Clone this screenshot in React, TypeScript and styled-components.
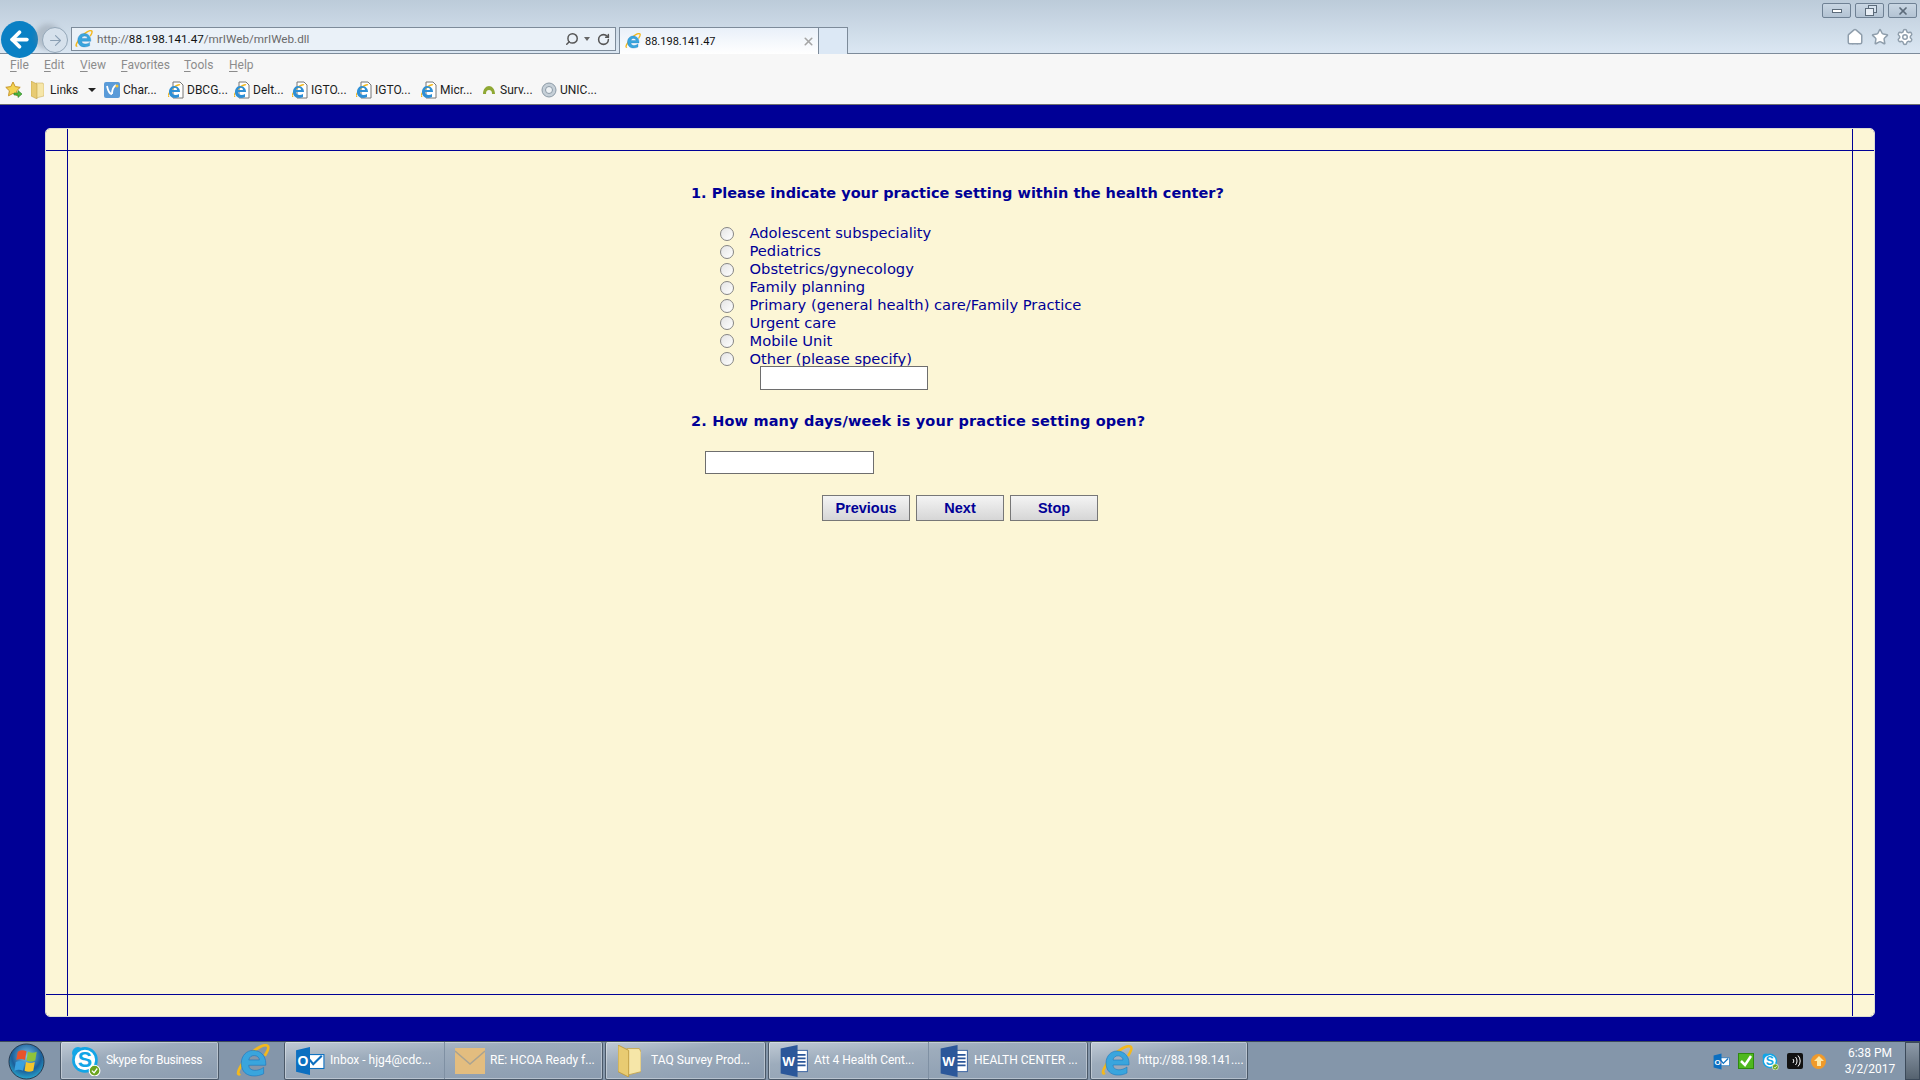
import React from 'react'
import styled, { createGlobalStyle } from 'styled-components'
import { ArrowLeft, ArrowRight, Home, RotateCw, Search, Settings, Star, X } from 'lucide-react'

const UI_FONT = `Roboto, "Noto Sans", sans-serif`
const FORM_FONT = `"DejaVu Sans", Verdana, sans-serif`
const NAVY = '#000096'

const GlobalStyle = createGlobalStyle`
  html, body, #root {
    margin: 0;
    height: 100%;
  }
  body {
    overflow: hidden;
    font-family: ${UI_FONT};
  }
  * {
    box-sizing: border-box;
  }
`

const IeIcon = ({ size = 16 }: { size?: number }) => (
  <svg width={size} height={size} viewBox="0 0 32 32">
    <path d="M4 28c-5 3 0-9 7-16C17 5 27-1 30 2c1.500 2-1 6-3 9" fill="none" stroke="#f3b81d" strokeWidth="2.600" />
    <path
      d="M16 6c7 0 12 5 12 12v2H12c0 6 9 6 14 2v6c-8 4-21 3-21-10C5 11 10 6 16 6zm-4 9h10c0-5-9-6-10 0z"
      fill="#39a5dd"
      stroke="#1c78c0"
      strokeWidth="0.600"
    />
  </svg>
)

const IeGlyph = () => (
  <g>
    <path d="M2 13C0 15 2 9 5 6 8 3 12 1 13 2" fill="none" stroke="#f3b81d" strokeWidth="1.400" />
    <path d="M7 3c4 0 6 3 6 6H5c0 3 4 4 7 2v3c-4 2-10 1-10-5 0-3 2-6 5-6zM5 7h5c0-3-4-3-5 0z" fill="#2d8fd6" />
  </g>
)

const PageIcon = () => (
  <svg width="16" height="18" viewBox="0 0 16 18">
    <path d="M5 1h7l3 3v13H5z" fill="#fff" stroke="#777" />
    <g transform="translate(-1 2)">
      <IeGlyph />
    </g>
  </svg>
)

const StarIcon = () => (
  <svg width="18" height="18" viewBox="0 0 18 18">
    <path d="M8 1l2.200 4.600 5 .7-3.600 3.500.9 5L8 12.400 3.500 14.800l.9-5L.8 6.300l5-.7z" fill="#f4d453" stroke="#c7962a" />
    <path d="M9 12h4V9.500l4 3.500-4 3.500V14H9z" fill="#4fb83f" stroke="#2c7f25" strokeWidth="0.600" />
  </svg>
)

const FolderIcon = ({ height = 18 }: { height?: number }) => (
  <svg width={(height * 13) / 18} height={height} viewBox="0 0 13 18">
    <path d="M5 2h7l1 2v11l-8 2z" fill="#f6e6a8" stroke="#c5a650" strokeWidth="0.500" />
    <path d="M0 0l6 3v15l-6-3z" fill="#e8cb72" stroke="#bb9a3e" strokeWidth="0.500" />
  </svg>
)

const ChartIcon = () => (
  <svg width="16" height="16" viewBox="0 0 16 16">
    <rect width="16" height="16" rx="2" fill="#5a9bd8" />
    <path d="M3 4c1 5 3 8 5 8M12 3C9 5 8 8 8 12" fill="none" stroke="#fff" strokeWidth="1.800" />
    <circle cx="13" cy="4" r="1.500" fill="#f2c230" />
  </svg>
)

const SurveyIcon = () => (
  <svg width="16" height="16" viewBox="0 0 16 16">
    <path d="M2 12c0-5 3-8 6-8s6 3 6 8h-3c0-3-1-4-3-4s-3 1-3 4z" fill="#8fa834" />
  </svg>
)

const GlobeIcon = () => (
  <svg width="16" height="16" viewBox="0 0 16 16">
    <circle cx="8" cy="8" r="7" fill="#c6d0d8" stroke="#8c9aa6" />
    <circle cx="8" cy="8" r="3.500" fill="#eef2f5" stroke="#8c9aa6" />
  </svg>
)

const OrbIcon = () => (
  <svg width="37" height="37" viewBox="0 0 38 38">
    <defs>
      <radialGradient id="orbFill" cx="50%" cy="35%" r="70%">
        <stop offset="0" stopColor="#7cc4ea" />
        <stop offset="0.600" stopColor="#1b5f9a" />
        <stop offset="1" stopColor="#2bb6d8" />
      </radialGradient>
    </defs>
    <circle cx="19" cy="19" r="18" fill="url(#orbFill)" stroke="#26394f" />
    <path d="M10 9c3-2 6-2 9-.500l-1.500 9c-3-1.500-6-1.500-9 0z" fill="#e8532b" />
    <path d="M20.500 9c3 1.500 6 1.500 9 0l-1.500 9c-3 1.500-6 1.500-9 0z" fill="#8fc33a" />
    <path d="M8 19.500c3-1.500 6-1.500 9 0l-1.500 9c-3-1.500-6-1.500-9 0z" fill="#3aa1e0" />
    <path d="M18.500 19.500c3 1.500 6 1.500 9 0l-1.500 9c-3 1.500-6 1.500-9 0z" fill="#f5c52c" />
  </svg>
)

const SkypeIcon = ({ size = 30 }: { size?: number }) => (
  <svg width={size} height={size} viewBox="0 0 28 28">
    <circle cx="13" cy="13" r="10.500" fill="#fff" stroke="#12a5e6" strokeWidth="3" />
    <circle cx="6.500" cy="6.500" r="5.500" fill="#12a5e6" />
    <circle cx="19.500" cy="19.500" r="5.500" fill="#12a5e6" />
    <circle cx="13" cy="13" r="9.500" fill="#fff" />
    <text x="13" y="20" textAnchor="middle" fontFamily="Liberation Sans" fontWeight="700" fontSize="20" fill="#12a5e6">
      S
    </text>
    <circle cx="22" cy="23" r="5" fill="#6ba41f" stroke="#fff" />
    <path d="M19.500 23l2 2 3-4" fill="none" stroke="#fff" strokeWidth="1.200" />
  </svg>
)

const OutlookIcon = ({ size = 30 }: { size?: number }) => (
  <svg width={size} height={size} viewBox="0 0 28 28">
    <rect x="11" y="8" width="16" height="13" fill="#fff" stroke="#0c6fc0" />
    <path d="M13 12l4 5 8-8" fill="none" stroke="#0c6fc0" strokeWidth="2" />
    <path d="M1 4l13-3v26L1 24z" fill="#0c6fc0" />
    <text x="7.500" y="19" textAnchor="middle" fontFamily="Liberation Sans" fontWeight="700" fontSize="13" fill="#fff">
      O
    </text>
  </svg>
)

const MailIcon = () => (
  <svg width="30" height="26" viewBox="0 0 30 26">
    <rect width="30" height="26" fill="#e3bd7f" />
    <path d="M0 3l15 13L30 3" fill="none" stroke="#a9a392" strokeWidth="1.500" />
  </svg>
)

const WordIcon = () => (
  <svg width="30" height="32" viewBox="0 0 30 36">
    <rect x="14" y="6" width="16" height="24" fill="#fff" stroke="#2b579a" />
    <path d="M18 11h10M18 15h10M18 19h10M18 23h10" stroke="#2b579a" strokeWidth="2" />
    <path d="M0 4l19-4v36L0 32z" fill="#2b579a" />
    <text x="9" y="24" textAnchor="middle" fontFamily="Liberation Sans" fontWeight="700" fontSize="15" fill="#fff">
      W
    </text>
  </svg>
)

const menuItems = [
  { key: 'F', rest: 'ile', w: 34 },
  { key: 'E', rest: 'dit', w: 36 },
  { key: 'V', rest: 'iew', w: 41 },
  { key: 'F', rest: 'avorites', w: 63 },
  { key: 'T', rest: 'ools', w: 45 },
  { key: 'H', rest: 'elp', w: 30 },
]

const favorites = [
  { label: 'Char...', icon: <ChartIcon />, w: 64 },
  { label: 'DBCG...', icon: <PageIcon />, w: 66 },
  { label: 'Delt...', icon: <PageIcon />, w: 58 },
  { label: 'IGTO...', icon: <PageIcon />, w: 64 },
  { label: 'IGTO...', icon: <PageIcon />, w: 65 },
  { label: 'Micr...', icon: <PageIcon />, w: 60 },
  { label: 'Surv...', icon: <SurveyIcon />, w: 60 },
  { label: 'UNIC...', icon: <GlobeIcon />, w: 60 },
]

const options = [
  'Adolescent subspeciality',
  'Pediatrics',
  'Obstetrics/gynecology',
  'Family planning',
  'Primary (general health) care/Family Practice',
  'Urgent care',
  'Mobile Unit',
  'Other (please specify)',
]

const Browser = () => (
  <Div_Chrome>
    <Div_TitleBar>
      <Div_NavButtons>
        <Btn_Back>
          <ArrowLeft size={25} strokeWidth={3.600} color="#fff" />
        </Btn_Back>
        <Btn_Forward>
          <ArrowRight size={17} strokeWidth={1.500} color="#8a9fb3" />
        </Btn_Forward>
      </Div_NavButtons>
      <Div_AddressBar>
        <IeIcon size={18} />
        <Span_Url>
          http://<B_Host>88.198.141.47</B_Host>/mrIWeb/mrIWeb.dll
        </Span_Url>
        <Search size={14} strokeWidth={2.500} color="#555" style={{ transform: 'scaleX(-1)' }} />
        <I_Caret />
        <RotateCw size={13} strokeWidth={2.800} color="#555" />
      </Div_AddressBar>
      <Div_Tab>
        <IeIcon size={16} />
        <Span_TabTitle>88.198.141.47</Span_TabTitle>
        <X size={13} strokeWidth={3} color="#a5a5a5" />
      </Div_Tab>
      <Div_NewTab />
      <Div_WindowSide>
        <Div_WindowButtons>
          <Btn_Window>
            <I_Minimize />
          </Btn_Window>
          <Btn_Window>
            <I_Restore />
          </Btn_Window>
          <Btn_Window>
            <X size={12} strokeWidth={3.500} color="#5c6b7a" />
          </Btn_Window>
        </Div_WindowButtons>
        <Div_ToolIcons>
          <Home size={18} fill="#fff" color="#8f9eac" />
          <Star size={18} fill="#fff" color="#8f9eac" />
          <Settings size={18} fill="#fff" color="#8f9eac" />
        </Div_ToolIcons>
      </Div_WindowSide>
    </Div_TitleBar>
    <Div_MenuBar>
      {menuItems.map((item) => (
        <Span_Menu key={item.rest} $width={item.w}>
          <U_Key>{item.key}</U_Key>
          {item.rest}
        </Span_Menu>
      ))}
    </Div_MenuBar>
    <Div_LinksBar>
      <StarIcon />
      <Div_LinksFolder>
        <FolderIcon />
        <span>Links</span>
        <I_LinksCaret />
      </Div_LinksFolder>
      {favorites.map((fav, i) => (
        <Div_Favorite key={i} $width={fav.w}>
          {fav.icon}
          <span>{fav.label}</span>
        </Div_Favorite>
      ))}
    </Div_LinksBar>
  </Div_Chrome>
)

const Survey = () => (
  <Form_Survey>
    <H_Question>1. Please indicate your practice setting within the health center?</H_Question>
    <Div_Options>
      {options.map((option) => (
        <Label_Option key={option}>
          <Input_Radio type="radio" name="setting" />
          <Span_OptionText>{option}</Span_OptionText>
        </Label_Option>
      ))}
      <Input_Other type="text" />
    </Div_Options>
    <H_Question $tracking={0.17}>2. How many days/week is your practice setting open?</H_Question>
    <Input_Days type="text" />
    <Div_Buttons>
      <Btn_Survey type="button">Previous</Btn_Survey>
      <Btn_Survey type="button">Next</Btn_Survey>
      <Btn_Survey type="button">Stop</Btn_Survey>
    </Div_Buttons>
  </Form_Survey>
)

const Taskbar = () => (
  <Div_Taskbar>
    <Div_Orb>
      <OrbIcon />
    </Div_Orb>
    <Div_TaskButton $width={159}>
      <SkypeIcon />
      <Span_TaskLabel $tracking={-0.3}>Skype for Business</Span_TaskLabel>
    </Div_TaskButton>
    <Div_PinnedIcon>
      <IeIcon size={34} />
    </Div_PinnedIcon>
    <Div_TaskGroup>
      <Div_TaskSlice $width={160}>
        <OutlookIcon />
        <Span_TaskLabel>Inbox - hjg4@cdc...</Span_TaskLabel>
      </Div_TaskSlice>
      <Div_TaskSlice $width={157}>
        <MailIcon />
        <Span_TaskLabel>RE: HCOA Ready f...</Span_TaskLabel>
      </Div_TaskSlice>
    </Div_TaskGroup>
    <Div_TaskButton $width={161} $pad={12} $gap={10}>
      <FolderIcon height={32} />
      <Span_TaskLabel>TAQ Survey Prod...</Span_TaskLabel>
    </Div_TaskButton>
    <Div_TaskGroup>
      <Div_TaskSlice $width={160}>
        <WordIcon />
        <Span_TaskLabel>Att 4 Health Cent...</Span_TaskLabel>
      </Div_TaskSlice>
      <Div_TaskSlice $width={158}>
        <WordIcon />
        <Span_TaskLabel>HEALTH CENTER ...</Span_TaskLabel>
      </Div_TaskSlice>
    </Div_TaskGroup>
    <Div_TaskButton $width={158}>
      <IeIcon size={32} />
      <Span_TaskLabel>http://88.198.141....</Span_TaskLabel>
    </Div_TaskButton>
    <Div_Tray>
      <OutlookIcon size={17} />
      <I_GreenCheck>
        <svg width="14" height="14" viewBox="0 0 14 14">
          <path d="M2 7l4 4 6-9" fill="none" stroke="#fff" strokeWidth="2.500" />
        </svg>
      </I_GreenCheck>
      <SkypeIcon size={17} />
      <I_BlackSignal>
        <svg width="14" height="14" viewBox="0 0 14 14">
          <path d="M5 5a3 3 0 0 1 0 4M7.500 3a6 6 0 0 1 0 8M10 1.500a8 8 0 0 1 0 11" fill="none" stroke="#fff" />
        </svg>
      </I_BlackSignal>
      <I_Update>
        <svg width="10" height="10" viewBox="0 0 10 10">
          <path d="M5 0l5 5H7v5H3V5H0z" fill="#ffe9a6" />
        </svg>
      </I_Update>
      <Div_Clock>
        <span>6:38 PM</span>
        <span>3/2/2017</span>
      </Div_Clock>
    </Div_Tray>
    <Div_ShowDesktop />
  </Div_Taskbar>
)

const App = () => (
  <>
    <GlobalStyle />
    <Div_Page>
      <Browser />
      <Main_Content>
        <Div_Panel>
          <Div_Cell />
          <Div_Cell />
          <Div_Cell />
          <Div_Cell />
          <Div_Cell>
            <Survey />
          </Div_Cell>
          <Div_Cell />
          <Div_Cell />
          <Div_Cell />
          <Div_Cell />
        </Div_Panel>
      </Main_Content>
      <Taskbar />
    </Div_Page>
  </>
)

export default App

const Div_Page = styled.div`
  width: 1920px;
  height: 1080px;
  display: flex;
  flex-direction: column;
  overflow: hidden;
`

const Div_Chrome = styled.header`
  flex: none;
  height: 105px;
  background: #f7f7f7;
  border-bottom: 1px solid #6f6f6f;
`

const Div_TitleBar = styled.div`
  height: 54px;
  padding-top: 27px;
  display: flex;
  align-items: flex-start;
  background: linear-gradient(#bccbd9, #dbe7f3);
  border-bottom: 1px solid #7d8b9a;
`

const Div_NavButtons = styled.div`
  width: 71px;
  height: 26px;
  display: flex;
  align-items: center;
`

const Btn_Back = styled.div`
  margin: -1px 0 0 1px;
  width: 37px;
  height: 37px;
  flex: none;
  display: flex;
  align-items: center;
  justify-content: center;
  border-radius: 50%;
  background: #0a80c4;
`

const Btn_Forward = styled.div`
  margin-left: 4px;
  width: 26px;
  height: 26px;
  flex: none;
  display: flex;
  align-items: center;
  justify-content: center;
  border-radius: 50%;
  border: 1px solid #94a7b8;
  background: #d6e1ec;
  box-shadow: -7px -3px 5px rgba(120, 130, 140, 0.35);
`

const Div_AddressBar = styled.div`
  width: 545px;
  height: 24px;
  padding: 0 5px 0 3px;
  display: flex;
  align-items: center;
  background: #eaf1f8;
  border: 1px solid #7d8b9a;
`

const Span_Url = styled.span`
  flex: 1;
  margin-left: 4px;
  font-size: 11.700px;
  color: #6a6a6a;
`

const B_Host = styled.span`
  color: #111;
`

const I_Caret = styled.i`
  margin: 0 7px 0 5px;
  border-left: 3px solid transparent;
  border-right: 3px solid transparent;
  border-top: 4px solid #666;
`

const Div_Tab = styled.div`
  margin-left: 3px;
  width: 200px;
  height: 27px;
  padding: 0 3px 0 5px;
  display: flex;
  align-items: center;
  background: linear-gradient(#e9f0f9, #fff);
  border: 1px solid #7d8b9a;
  border-bottom: none;
`

const Span_TabTitle = styled.span`
  flex: 1;
  margin-left: 4px;
  font-size: 11px;
  color: #111;
`

const Div_NewTab = styled.div`
  width: 29px;
  height: 27px;
  background: #dce8f5;
  border: 1px solid #7d8b9a;
  border-left: none;
  border-bottom: none;
`

const Div_WindowSide = styled.div`
  flex: 1;
  align-self: stretch;
  margin-top: -27px;
  display: flex;
  flex-direction: column;
  align-items: flex-end;
`

const Div_WindowButtons = styled.div`
  margin: 3px 3px 0 0;
  display: flex;
  gap: 4px;
`

const Btn_Window = styled.div`
  width: 29px;
  height: 15px;
  display: flex;
  align-items: center;
  justify-content: center;
  background: linear-gradient(#c9d6e3, #b3c3d3);
  border: 1px solid #6f8194;
  border-radius: 2px;
`

const I_Minimize = styled.i`
  width: 10px;
  height: 4px;
  background: #fff;
  border: 1px solid #5c6b7a;
`

const I_Restore = styled.i`
  width: 9px;
  height: 8px;
  margin-top: 2px;
  border: 1px solid #5c6b7a;
  box-shadow: 3px -3px 0 -1px #d6e2ee, 3px -3px 0 0 #5c6b7a;
  background: #e8eef5;
`

const Div_ToolIcons = styled.div`
  margin: 10px 6px 0 0;
  display: flex;
  gap: 7px;
`

const Div_MenuBar = styled.nav`
  height: 22px;
  padding-left: 10px;
  display: flex;
  align-items: center;
`

const Span_Menu = styled.span<{ $width: number }>`
  width: ${(p) => p.$width}px;
  font-size: 12px;
  color: #8c8c8c;
`

const U_Key = styled.u`
  text-underline-offset: 2px;
`

const Div_LinksBar = styled.nav`
  height: 27px;
  padding-left: 5px;
  display: flex;
  align-items: center;
  font-size: 12px;
  color: #1c1c1c;
`

const Div_LinksFolder = styled.div`
  width: 73px;
  margin-left: 8px;
  display: flex;
  align-items: center;
  gap: 6px;
`

const I_LinksCaret = styled.i`
  margin-left: 4px;
  border-left: 4px solid transparent;
  border-right: 4px solid transparent;
  border-top: 4px solid #222;
`

const Div_Favorite = styled.div<{ $width: number }>`
  width: ${(p) => p.$width}px;
  flex: none;
  display: flex;
  align-items: center;
  gap: 3px;
`

const Main_Content = styled.main`
  flex: 1;
  min-height: 0;
  padding: 23px 45px 24px;
  display: flex;
  background: ${NAVY};
`

const Div_Panel = styled.div`
  flex: 1;
  display: grid;
  grid-template-columns: 21px 1fr 21px;
  grid-template-rows: 21px 1fr 21px;
  gap: 1px;
  background: ${NAVY};
  border: 1px solid #dcdcd0;
  border-radius: 5px;
  overflow: hidden;
`

const Div_Cell = styled.div`
  background: #fcf6d6;
`

const Form_Survey = styled.form`
  width: 538px;
  margin: 0 auto;
  padding-top: 32px;
  color: ${NAVY};
  font-family: ${FORM_FONT};
`

const H_Question = styled.h2<{ $tracking?: number }>`
  margin: 0;
  height: 20px;
  font-size: 14.500px;
  line-height: 20px;
  font-weight: 700;
  letter-spacing: ${(p) => p.$tracking ?? 0}px;
  white-space: nowrap;
`

const Div_Options = styled.div`
  margin: 22px 0 21px 29px;
  display: flex;
  flex-direction: column;
`

const Label_Option = styled.label`
  height: 17.900px;
  display: flex;
  align-items: center;
  gap: 15.500px;
  font-size: 14.700px;
`

const Span_OptionText = styled.span`
  margin-top: -2px;
`

const Input_Radio = styled.input`
  appearance: none;
  margin: 0;
  width: 14px;
  height: 14px;
  flex: none;
  border-radius: 50%;
  border: 1.500px solid #858585;
  background: linear-gradient(135deg, #e4e4e4, #fff);
`

const Input_Other = styled.input`
  margin: -2px 0 0 40px;
  width: 168px;
  height: 24px;
  background: #fff;
  border: 1px solid #6e6e6e;
`

const Input_Days = styled.input`
  display: block;
  margin: 20px 0 0 14px;
  width: 169px;
  height: 23px;
  background: #fff;
  border: 1px solid #6e6e6e;
`

const Div_Buttons = styled.div`
  margin: 21px 0 0 131px;
  display: flex;
  gap: 6px;
`

const Btn_Survey = styled.button`
  width: 88px;
  height: 26px;
  padding: 0;
  font-family: "Liberation Sans", Arial, sans-serif;
  font-size: 14.500px;
  font-weight: 700;
  color: ${NAVY};
  background: linear-gradient(#f4f4f4, #d6d6d6);
  border: 1px solid #777;
`

const Div_Taskbar = styled.footer`
  flex: none;
  height: 39px;
  display: flex;
  align-items: stretch;
  color: #fff;
  font-size: 12px;
  background: #8496aa;
  border-top: 1px solid #3c4a5a;
`

const Div_Orb = styled.div`
  width: 60px;
  padding-left: 8px;
  display: flex;
  align-items: center;
`

const Div_TaskButton = styled.div<{ $width: number; $pad?: number; $gap?: number }>`
  width: ${(p) => p.$width}px;
  flex: none;
  margin-right: 2px;
  padding-left: ${(p) => p.$pad ?? 10}px;
  display: flex;
  align-items: center;
  gap: ${(p) => p.$gap ?? 5}px;
  background: linear-gradient(170deg, #c0cad5 0%, #9dacbc 35%, #8a9baf 100%);
  border: 1px solid #4a5868;
  border-top: none;
  border-radius: 2px;
  box-shadow: inset 0 0 0 1px rgba(255, 255, 255, 0.35);
  overflow: hidden;
`

const Span_TaskLabel = styled.span<{ $tracking?: number }>`
  white-space: nowrap;
  margin-top: -1px;
  letter-spacing: ${(p) => p.$tracking ?? 0}px;
`

const Div_PinnedIcon = styled.div`
  width: 63px;
  flex: none;
  display: flex;
  align-items: center;
  justify-content: center;
`

const Div_TaskGroup = styled.div`
  flex: none;
  margin-right: 2px;
  display: flex;
  background: linear-gradient(175deg, #c0cad5 0%, #9dacbc 35%, #8a9baf 100%);
  border: 1px solid #4a5868;
  border-top: none;
  border-radius: 2px;
  box-shadow: inset 0 0 0 1px rgba(255, 255, 255, 0.35);
`

const Div_TaskSlice = styled.div<{ $width: number }>`
  width: ${(p) => p.$width}px;
  padding-left: 10px;
  display: flex;
  align-items: center;
  gap: 5px;
  overflow: hidden;
  &:first-child {
    border-right: 1px solid #7f90a3;
  }
`

const Div_Tray = styled.div`
  flex: 1;
  display: flex;
  align-items: center;
  justify-content: flex-end;
  gap: 8px;
  padding-right: 2px;
`

const I_GreenCheck = styled.i`
  width: 16px;
  height: 16px;
  display: flex;
  align-items: center;
  justify-content: center;
  background: #4fb81f;
  border: 1px solid #2e8a0e;
`

const I_BlackSignal = styled.i`
  width: 16px;
  height: 16px;
  display: flex;
  align-items: center;
  justify-content: center;
  background: #111;
  border-radius: 2px;
`

const I_Update = styled.i`
  width: 15px;
  height: 15px;
  display: flex;
  align-items: center;
  justify-content: center;
  background: #f09a2a;
  border-radius: 50%;
`

const Div_Clock = styled.div`
  width: 66px;
  margin-left: 3px;
  display: flex;
  flex-direction: column;
  align-items: center;
  gap: 1px;
  line-height: 15px;
`

const Div_ShowDesktop = styled.div`
  width: 15px;
  flex: none;
  background: linear-gradient(#8d9aa9, #55626f);
  border: 1px solid #3c4a5a;
`
